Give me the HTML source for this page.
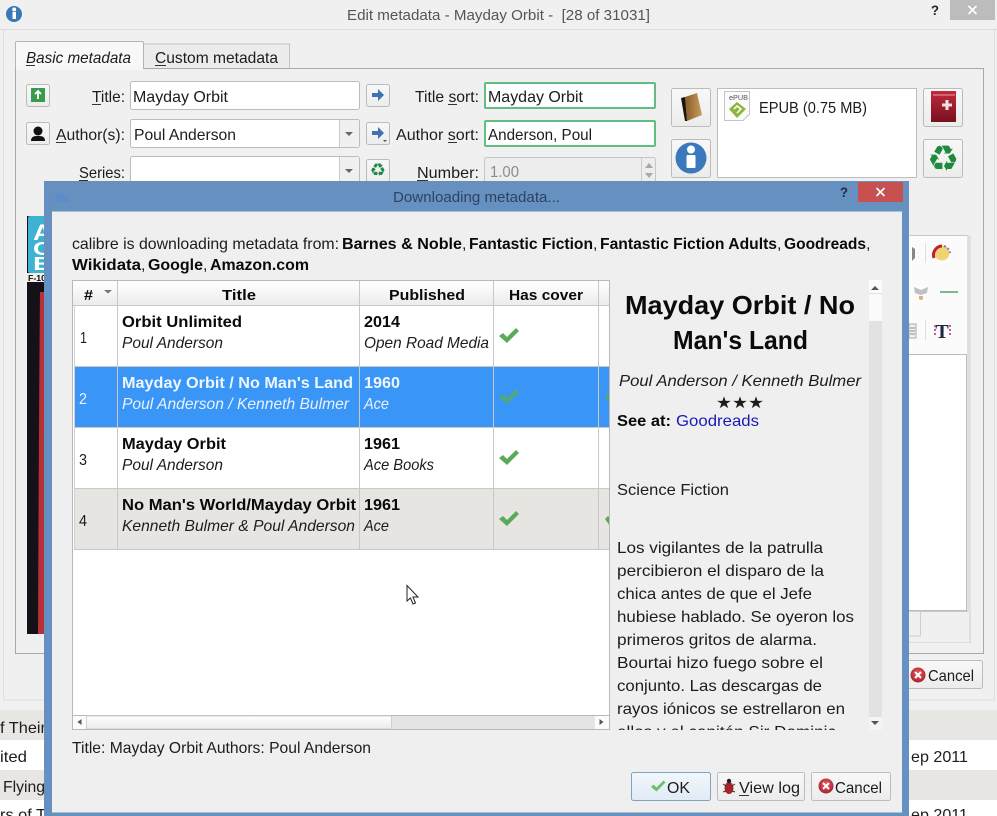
<!DOCTYPE html>
<html><head><meta charset="utf-8"><title>Edit metadata</title>
<style>
html,body{margin:0;padding:0;width:997px;height:816px;overflow:hidden;background:#f0f0f0}
svg{display:block}
text{font-family:"Liberation Sans",sans-serif;font-size:16px;fill:#1c1c1c}
.b{font-weight:bold;fill:#0a0a0a}
.i{font-style:italic}
.w{fill:#fff}
.g{fill:#e8f2ff}
</style></head><body>
<svg width="997" height="816" viewBox="0 0 997 816" xmlns="http://www.w3.org/2000/svg">
<defs>
<linearGradient id="hd" x1="0" y1="0" x2="0" y2="1"><stop offset="0" stop-color="#fff"/><stop offset="1" stop-color="#ebebeb"/></linearGradient>
<linearGradient id="btn" x1="0" y1="0" x2="0" y2="1"><stop offset="0" stop-color="#f8f8f8"/><stop offset="1" stop-color="#ececec"/></linearGradient>
<linearGradient id="ok" x1="0" y1="0" x2="0" y2="1"><stop offset="0" stop-color="#f2f7fb"/><stop offset="1" stop-color="#dfebf5"/></linearGradient>
<linearGradient id="rb" x1="0" y1="0" x2="0" y2="1"><stop offset="0" stop-color="#c42a3f"/><stop offset="1" stop-color="#76101f"/></linearGradient>
<linearGradient id="bk" x1="0" y1="0" x2="1" y2="0"><stop offset="0" stop-color="#8a5c28"/><stop offset="1" stop-color="#c99c5e"/></linearGradient>
<radialGradient id="cn" cx=".5" cy=".4" r=".6"><stop offset="0" stop-color="#e8606a"/><stop offset="1" stop-color="#a81f2a"/></radialGradient>
<clipPath id="pane"><rect x="612" y="281" width="256" height="449"/></clipPath>
<clipPath id="tbl"><rect x="73" y="281" width="536" height="434"/></clipPath>
</defs>

<!-- main window -->
<rect width="997" height="816" fill="#f0f0f0"/>
<path d="M0 29.5H997" stroke="#dcdcdc"/>
<path d="M3.5 29V700H994.5V29" fill="none" stroke="#dedede"/>
<circle cx="14" cy="14" r="8" fill="#3a78b8"/><rect x="12.5" y="12" width="3.5" height="7" fill="#fff"/><circle cx="14.2" cy="9.5" r="2" fill="#fff"/>
<text x="347" y="20" xml:space="preserve" textLength="303" lengthAdjust="spacingAndGlyphs" style="font-size:15px;fill:#555;white-space:pre">Edit metadata - Mayday Orbit -  [28 of 31031]</text>
<text x="931" y="15" textLength="8" lengthAdjust="spacingAndGlyphs" class="b" style="font-size:14px;fill:#222">?</text>
<rect x="950" y="0" width="45" height="20" fill="#bcbcbc"/>
<path d="M968.5 6l8 8M976.5 6l-8 8" stroke="#fff" stroke-width="1.6"/>

<!-- tabs -->
<rect x="15.5" y="68.5" width="968" height="585" fill="#f0f0f0" stroke="#a8a8a8"/>
<path d="M143.5 68V44H289.5V68" fill="#ececec" stroke="#c4c4c4"/>
<path d="M15.5 69V42.5Q15.5 41.5 17 41.5H142Q143.5 41.5 143.5 43V69" fill="#f8f8f8" stroke="#b4b4b4"/>
<rect x="16" y="66" width="127" height="4" fill="#f6f6f6"/>
<text x="26" y="63" class="i" textLength="105" lengthAdjust="spacingAndGlyphs">Basic metadata</text>
<path d="M26 65.5h9" stroke="#333"/>
<text x="155" y="63" textLength="123" lengthAdjust="spacingAndGlyphs">Custom metadata</text>
<path d="M155 65.5h11" stroke="#333"/>

<!-- form row 1 -->
<rect x="26.5" y="84.5" width="23" height="22" rx="2" fill="url(#btn)" stroke="#bbb"/>
<rect x="31" y="88" width="14" height="14" fill="#3c9a4c"/><path d="M38 99V92M35 94l3-3 3 3" stroke="#fff" stroke-width="1.8" fill="none"/>
<text x="92" y="102" textLength="33" lengthAdjust="spacingAndGlyphs">Title:</text><path d="M92 104.5h9" stroke="#333"/>
<rect x="130.5" y="81.5" width="229" height="28" rx="2" fill="#fff" stroke="#bcbcbc"/>
<text x="133" y="102" textLength="95" lengthAdjust="spacingAndGlyphs">Mayday Orbit</text>
<rect x="366.5" y="84.5" width="23" height="22" rx="2" fill="url(#btn)" stroke="#bbb"/>
<path d="M372 93h6v-4l6 6-6 6v-4h-6z" fill="#3f72b0"/>
<text x="415" y="102" textLength="64" lengthAdjust="spacingAndGlyphs">Title sort:</text><path d="M448 104.5h9" stroke="#333"/>
<rect x="485" y="83" width="170" height="25" rx="1" fill="#fff" stroke="#62bd80" stroke-width="2"/>
<text x="488" y="102" textLength="95" lengthAdjust="spacingAndGlyphs">Mayday Orbit</text>

<!-- form row 2 -->
<rect x="26.5" y="122.5" width="23" height="22" rx="2" fill="url(#btn)" stroke="#bbb"/>
<circle cx="38" cy="131" r="4.5" fill="#111"/><path d="M31 141c0-5 4-5 7-5s7 0 7 5z" fill="#111"/>
<text x="56" y="140" textLength="69" lengthAdjust="spacingAndGlyphs">Author(s):</text><path d="M56 142.5h10" stroke="#333"/>
<rect x="130.5" y="119.5" width="229" height="28" rx="2" fill="#fff" stroke="#bcbcbc"/>
<rect x="339.5" y="120" width="19.5" height="27" fill="#f0f0f0"/><path d="M339.5 120v27" stroke="#ccc"/>
<path d="M345 132h8l-4 4z" fill="#666"/>
<text x="134" y="140" textLength="102" lengthAdjust="spacingAndGlyphs">Poul Anderson</text>
<rect x="366.5" y="122.5" width="23" height="22" rx="2" fill="url(#btn)" stroke="#bbb"/>
<path d="M372 131h6v-4l6 6-6 6v-4h-6z" fill="#3f72b0"/><path d="M383 140h4l-2 2z" fill="#555"/>
<text x="396" y="140" textLength="83" lengthAdjust="spacingAndGlyphs">Author sort:</text><path d="M448 142.5h9" stroke="#333"/>
<rect x="485" y="121" width="170" height="25" rx="1" fill="#fff" stroke="#62bd80" stroke-width="2"/>
<text x="488" y="140" textLength="104" lengthAdjust="spacingAndGlyphs">Anderson, Poul</text>

<!-- form row 3 -->
<text x="79" y="178" textLength="46" lengthAdjust="spacingAndGlyphs">Series:</text><path d="M79 180.5h9" stroke="#333"/>
<rect x="130.5" y="156.5" width="229" height="30" rx="2" fill="#fff" stroke="#bcbcbc"/>
<rect x="339.5" y="157" width="19.5" height="29" fill="#f0f0f0"/><path d="M339.5 157v29" stroke="#ccc"/>
<path d="M345 169h8l-4 4z" fill="#666"/>
<rect x="366.5" y="159.5" width="23" height="24" rx="2" fill="url(#btn)" stroke="#bbb"/>
<text x="378" y="176" text-anchor="middle" style="font-family:'DejaVu Sans',sans-serif;font-size:18px;fill:#1e8a4a">♻</text>
<text x="417" y="178" textLength="62" lengthAdjust="spacingAndGlyphs">Number:</text><path d="M417 180.5h11" stroke="#333"/>
<rect x="484.5" y="157.5" width="171" height="28" rx="2" fill="#ededed" stroke="#c6c6c6"/>
<path d="M641.5 158v27" stroke="#ccc"/><path d="M645 168h8l-4-5zM645 173h8l-4 5z" fill="#a8a8a8"/>
<text x="490" y="177" textLength="29" lengthAdjust="spacingAndGlyphs" style="fill:#8c8c8c">1.00</text>

<!-- right buttons -->
<rect x="671.5" y="88.5" width="39" height="38" rx="2" fill="url(#btn)" stroke="#bbb"/>
<path d="M685 97l12-4 5 22-15 6z" fill="url(#bk)"/><path d="M681 98l4-1 2 24-2 0z" fill="#1a1408"/>
<rect x="671.5" y="139.5" width="39" height="38" rx="2" fill="url(#btn)" stroke="#bbb"/>
<circle cx="691" cy="158" r="15.5" fill="#3a79bb"/><rect x="686.5" y="155" width="9" height="13" rx="1" fill="#fff"/><circle cx="691" cy="149.5" r="4" fill="#fff"/>
<rect x="717.5" y="88.5" width="199" height="89" fill="#fff" stroke="#bdbdbd"/>
<path d="M724.5 91.5H749.5V114L743 120.5H724.5Z" fill="#fbfbfb" stroke="#c4c4c4"/>
<text x="729" y="100" textLength="19" lengthAdjust="spacingAndGlyphs" style="font-size:7px;fill:#555">ePUB</text>
<path d="M737 102l9 7-9 9-8-9z" fill="#8eb53f"/><path d="M734 109l3-3 4 3-4 4" fill="none" stroke="#fff" stroke-width="1.5"/>
<text x="759" y="113" textLength="108" lengthAdjust="spacingAndGlyphs">EPUB (0.75 MB)</text>
<rect x="923.5" y="88.5" width="39" height="38" rx="2" fill="url(#btn)" stroke="#bbb"/>
<path d="M931 91h25v31h-25z" fill="url(#rb)"/><path d="M933 95h22" stroke="#e8a0a8"/>
<path d="M947 100v10M942 105h10" stroke="#f4e0e0" stroke-width="3"/>
<rect x="923.5" y="139.5" width="39" height="38" rx="2" fill="url(#btn)" stroke="#bbb"/>
<text x="943" y="171" text-anchor="middle" style="font-family:'DejaVu Sans',sans-serif;font-size:36px;fill:#1f8a3e">♻</text>

<!-- cover -->
<rect x="27" y="216" width="20" height="418" fill="#141218"/>
<rect x="28" y="216" width="19" height="57" rx="2" fill="#3fb2d2"/>
<rect x="27" y="273" width="20" height="9" fill="#f0efe8"/>
<text x="28" y="281" textLength="18" lengthAdjust="spacingAndGlyphs" class="b" style="font-size:8px">F-10</text>
<text x="33" y="240" textLength="19" lengthAdjust="spacingAndGlyphs" class="b w" style="font-size:22px">A</text>
<text x="33" y="255" textLength="19" lengthAdjust="spacingAndGlyphs" class="b w" style="font-size:18px">C</text>
<text x="33" y="270" textLength="19" lengthAdjust="spacingAndGlyphs" class="b w" style="font-size:18px">E</text>
<path d="M40 292Q39 400 38 634H47V292Z" fill="#b83038"/>

<!-- right behind area -->
<rect x="900" y="235.5" width="68" height="376" fill="#fbfbfb" stroke="#c8c8c8"/>
<path d="M970 236V642" stroke="#dcdcdc" stroke-width="1.5"/>
<rect x="900" y="354.5" width="66.5" height="256" fill="#fff" stroke="#bcbcbc"/>
<path d="M925.5 243v20M925.5 320v20" stroke="#ddd"/>
<circle cx="942" cy="253" r="7.5" fill="#f0d470"/><path d="M934 258a9 9 0 0 1 8-12" fill="none" stroke="#c02030" stroke-width="3"/><path d="M944 246a9 9 0 0 1 6 7" fill="none" stroke="#8a70c0" stroke-width="2" stroke-dasharray="2 2"/>
<path d="M912 247l3 2v9l-3 3z" fill="#888"/>
<path d="M914 287l7 3 7-3-1 6-6 2-6-2zM919 296h4v3h-4z" fill="#c0c0c0"/><circle cx="921" cy="298" r="2" fill="#e2b070"/>
<path d="M940 292h18" stroke="#6cb07c" stroke-width="1.8"/>
<rect x="909" y="324" width="7" height="14" fill="#f2f2f2" stroke="#aaa"/><path d="M910 328h5M910 331h5M910 334h5" stroke="#888"/>
<text x="942" y="338" text-anchor="middle" class="b" style="font-family:'Liberation Serif',serif;font-size:20px;fill:#202840">T</text>
<path d="M935 325v11M950 325v11" stroke="#c060a0" stroke-width="2" stroke-dasharray="2 2"/>
<rect x="900" y="611.5" width="20.500" height="24.500" fill="#f0f0f0" stroke="#cfcfcf"/>
<path d="M900 642.5H970.5V612" fill="none" stroke="#dcdcdc"/>
<rect x="905" y="660.5" width="77.5" height="28" rx="2" fill="url(#btn)" stroke="#bcbcbc"/>
<circle cx="918" cy="675" r="7.5" fill="url(#cn)"/><path d="M915 672l6 6M921 672l-6 6" stroke="#fff" stroke-width="2"/>
<text x="928" y="681" textLength="46" lengthAdjust="spacingAndGlyphs">Cancel</text>

<!-- bottom rows -->
<rect x="0" y="710" width="997" height="30" fill="#e8e6e3"/>
<rect x="0" y="740" width="997" height="30" fill="#fff"/>
<rect x="0" y="770" width="997" height="30" fill="#e8e6e3"/>
<rect x="0" y="800" width="997" height="16" fill="#fff"/>
<text x="0" y="733" textLength="46" lengthAdjust="spacingAndGlyphs">f Their</text>
<text x="0" y="762" textLength="27" lengthAdjust="spacingAndGlyphs">ited</text>
<text x="3" y="792" textLength="42" lengthAdjust="spacingAndGlyphs">Flying</text>
<text x="0" y="820" textLength="46" lengthAdjust="spacingAndGlyphs">rs of T</text>
<text x="911" y="762" textLength="57" lengthAdjust="spacingAndGlyphs">ep 2011</text>
<text x="911" y="820" textLength="57" lengthAdjust="spacingAndGlyphs">ep 2011</text>

<!-- dialog -->
<rect x="44" y="181" width="865" height="632" fill="#6690bf"/>
<rect x="44" y="812" width="865" height="4" fill="#6690bf"/>
<rect x="52" y="211.5" width="850" height="601" fill="#efefef"/>
<path d="M55 198a6 5 0 0 1 12 0c3 0 3 4 0 4H57c-3 0-3-4-2-4z" fill="#5d8ccb"/>
<text x="393" y="202" textLength="167" lengthAdjust="spacingAndGlyphs" style="font-size:15px;fill:#2c4464">Downloading metadata...</text>
<text x="840" y="197" textLength="8" lengthAdjust="spacingAndGlyphs" class="b" style="font-size:14px;fill:#1c2c44">?</text>
<rect x="858" y="182" width="45" height="20" fill="#c75050"/>
<path d="M876.5 188l8 8M884.5 188l-8 8" stroke="#fff" stroke-width="1.6"/>

<text x="72" y="249" textLength="267" lengthAdjust="spacingAndGlyphs">calibre is downloading metadata from:</text>
<text x="342" y="249" class="b" textLength="120" lengthAdjust="spacingAndGlyphs">Barnes &amp; Noble</text><text x="462" y="249">,</text>
<text x="469" y="249" class="b" textLength="124" lengthAdjust="spacingAndGlyphs">Fantastic Fiction</text><text x="593" y="249">,</text>
<text x="600" y="249" class="b" textLength="177" lengthAdjust="spacingAndGlyphs">Fantastic Fiction Adults</text><text x="777" y="249">,</text>
<text x="784" y="249" class="b" textLength="82" lengthAdjust="spacingAndGlyphs">Goodreads</text><text x="866" y="249">,</text>
<text x="72" y="270" class="b" textLength="69" lengthAdjust="spacingAndGlyphs">Wikidata</text><text x="141" y="270">,</text>
<text x="148" y="270" class="b" textLength="55" lengthAdjust="spacingAndGlyphs">Google</text><text x="203" y="270">,</text>
<text x="210" y="270" class="b" textLength="99" lengthAdjust="spacingAndGlyphs">Amazon.com</text>

<!-- table -->
<rect x="72.5" y="280.5" width="537" height="449" fill="#fff" stroke="#b8b8b8"/>
<g clip-path="url(#tbl)">
<rect x="73" y="281" width="536" height="24.5" fill="url(#hd)"/>
<rect x="74" y="367" width="535" height="60" fill="#3a96f6"/>
<rect x="74" y="489" width="535" height="60" fill="#e6e5e1"/>
<path d="M73 305.5H609M74 366.5H609M74 427.5H609M74 488.5H609M74 549.5H609" stroke="#c8c8c8"/>
<path d="M117.5 281V549M359.5 281V549M493.5 281V549M598.5 281V549" stroke="#c8c8c8"/>
<path d="M74.5 306V549" stroke="#d0d0d0"/>
<text x="84" y="300" class="b" textLength="9" lengthAdjust="spacingAndGlyphs" style="font-size:15px">#</text>
<path d="M104 290h8l-4 3.5z" fill="#777"/>
<text x="222" y="300" class="b" textLength="34" lengthAdjust="spacingAndGlyphs" style="font-size:15px">Title</text>
<text x="389" y="300" class="b" textLength="76" lengthAdjust="spacingAndGlyphs" style="font-size:15px">Published</text>
<text x="509" y="300" class="b" textLength="74" lengthAdjust="spacingAndGlyphs" style="font-size:15px">Has cover</text>

<text x="80" y="343" textLength="7" lengthAdjust="spacingAndGlyphs">1</text>
<text x="122" y="327" class="b" textLength="120" lengthAdjust="spacingAndGlyphs">Orbit Unlimited</text>
<text x="122" y="348" class="i" textLength="101" lengthAdjust="spacingAndGlyphs">Poul Anderson</text>
<text x="364" y="327" class="b" textLength="36" lengthAdjust="spacingAndGlyphs">2014</text>
<text x="364" y="348" class="i" textLength="125" lengthAdjust="spacingAndGlyphs">Open Road Media</text>

<text x="79" y="404" textLength="8" lengthAdjust="spacingAndGlyphs" class="g">2</text>
<text x="122" y="388" class="b w" textLength="231" lengthAdjust="spacingAndGlyphs" style="fill:#eef6ff">Mayday Orbit / No Man's Land</text>
<text x="122" y="409" class="i g" textLength="227" lengthAdjust="spacingAndGlyphs">Poul Anderson / Kenneth Bulmer</text>
<text x="364" y="388" class="b" textLength="36" lengthAdjust="spacingAndGlyphs" style="fill:#eef6ff">1960</text>
<text x="364" y="409" class="i g" textLength="25" lengthAdjust="spacingAndGlyphs">Ace</text>

<text x="79" y="465" textLength="8" lengthAdjust="spacingAndGlyphs">3</text>
<text x="122" y="449" class="b" textLength="104" lengthAdjust="spacingAndGlyphs">Mayday Orbit</text>
<text x="122" y="470" class="i" textLength="101" lengthAdjust="spacingAndGlyphs">Poul Anderson</text>
<text x="364" y="449" class="b" textLength="36" lengthAdjust="spacingAndGlyphs">1961</text>
<text x="364" y="470" class="i" textLength="70" lengthAdjust="spacingAndGlyphs">Ace Books</text>

<text x="79" y="526" textLength="8" lengthAdjust="spacingAndGlyphs">4</text>
<text x="122" y="510" class="b" textLength="234" lengthAdjust="spacingAndGlyphs">No Man's World/Mayday Orbit</text>
<text x="122" y="531" class="i" textLength="233" lengthAdjust="spacingAndGlyphs">Kenneth Bulmer &amp; Poul Anderson</text>
<text x="364" y="510" class="b" textLength="36" lengthAdjust="spacingAndGlyphs">1961</text>
<text x="364" y="531" class="i" textLength="25" lengthAdjust="spacingAndGlyphs">Ace</text>

<path d="M499 336l4-3 4 4 9-9 3 3-12 12z" fill="#59ab58"/>
<path d="M499 397l4-3 4 4 9-9 3 3-12 12z" fill="#52a878"/>
<path d="M499 458l4-3 4 4 9-9 3 3-12 12z" fill="#59ab58"/>
<path d="M499 519l4-3 4 4 9-9 3 3-12 12z" fill="#59ab58"/>
<path d="M605 397l3-3 2 2v8z" fill="#52a878"/>
<path d="M605 519l3-3 2 2v8z" fill="#59ab58"/>
</g>
<!-- h scrollbar -->
<rect x="73" y="716" width="536" height="13.5" fill="#e4e4e4"/>
<path d="M73 715.5H609" stroke="#b8b8b8"/>
<rect x="86.5" y="716" width="305" height="13" fill="url(#hd)" stroke="#d0d0d0"/>
<rect x="73" y="716" width="13" height="13" fill="#fbfbfb"/>
<rect x="595" y="716" width="14" height="13" fill="#fbfbfb"/>
<path d="M81.5 719v6l-4-3z" fill="#555"/><path d="M599.5 719v6l4-3z" fill="#555"/>
<rect x="72.5" y="280.5" width="537" height="449" fill="none" stroke="#b8b8b8"/>

<!-- detail pane -->
<g clip-path="url(#pane)">
<text x="625" y="314" class="b" textLength="230" lengthAdjust="spacingAndGlyphs" style="font-size:26px">Mayday Orbit / No</text>
<text x="673" y="349" class="b" textLength="135" lengthAdjust="spacingAndGlyphs" style="font-size:26px">Man's Land</text>
<text x="619" y="386" class="i" textLength="242" lengthAdjust="spacingAndGlyphs">Poul Anderson / Kenneth Bulmer</text>
<text x="716" y="408" textLength="48" lengthAdjust="spacingAndGlyphs" style="font-family:'DejaVu Sans',sans-serif">★★★</text>
<text x="617" y="426" class="b" textLength="54" lengthAdjust="spacingAndGlyphs">See at:</text>
<text x="676" y="426" textLength="83" lengthAdjust="spacingAndGlyphs" style="fill:#1a1ab8">Goodreads</text>
<text x="617" y="495" textLength="112" lengthAdjust="spacingAndGlyphs">Science Fiction</text>
<text x="617" y="553" textLength="206" lengthAdjust="spacingAndGlyphs">Los vigilantes de la patrulla</text>
<text x="617" y="576" textLength="207" lengthAdjust="spacingAndGlyphs">percibieron el disparo de la</text>
<text x="617" y="599" textLength="195" lengthAdjust="spacingAndGlyphs">chica antes de que el Jefe</text>
<text x="617" y="622" textLength="237" lengthAdjust="spacingAndGlyphs">hubiese hablado. Se oyeron los</text>
<text x="617" y="645" textLength="200" lengthAdjust="spacingAndGlyphs">primeros gritos de alarma.</text>
<text x="617" y="668" textLength="206" lengthAdjust="spacingAndGlyphs">Bourtai hizo fuego sobre el</text>
<text x="617" y="691" textLength="205" lengthAdjust="spacingAndGlyphs">conjunto. Las descargas de</text>
<text x="617" y="714" textLength="228" lengthAdjust="spacingAndGlyphs">rayos iónicos se estrellaron en</text>
<text x="617" y="737" textLength="219" lengthAdjust="spacingAndGlyphs">ellos y el capitán Sir Dominic</text>
</g>
<rect x="869" y="280" width="13" height="450" fill="#e2e2e2"/>
<rect x="869" y="280" width="13" height="13" fill="#fbfbfb"/>
<rect x="869" y="294" width="13" height="27" fill="#fafafa"/>
<rect x="869" y="717" width="13" height="13" fill="#f4f4f4"/>
<path d="M871 290h8l-4-4z" fill="#555"/><path d="M871 721h8l-4 4z" fill="#555"/>

<text x="72" y="753" textLength="299" lengthAdjust="spacingAndGlyphs">Title: Mayday Orbit Authors: Poul Anderson</text>

<!-- dialog buttons -->
<rect x="631.5" y="772.5" width="79" height="28" rx="2" fill="url(#ok)" stroke="#7ea3c4"/>
<path d="M651 787l2.500-2.500 3 3 7-7 2 2-9 9z" fill="#6cc06c"/>
<text x="667" y="793" textLength="23" lengthAdjust="spacingAndGlyphs">OK</text>
<rect x="717.5" y="772.5" width="87" height="28" rx="2" fill="url(#btn)" stroke="#bcbcbc"/>
<ellipse cx="729" cy="788" rx="4.5" ry="6" fill="#a8222a"/><circle cx="729" cy="781" r="2.2" fill="#222"/><path d="M723 784l3 2M735 784l-3 2M723 792l3-1M735 792l-3-1" stroke="#333"/>
<text x="739" y="793" textLength="61" lengthAdjust="spacingAndGlyphs">View log</text><path d="M739 795.5h10" stroke="#333"/>
<rect x="811.5" y="772.5" width="79" height="28" rx="2" fill="url(#btn)" stroke="#bcbcbc"/>
<circle cx="826" cy="786" r="7.5" fill="url(#cn)"/><path d="M823 783l6 6M829 783l-6 6" stroke="#fff" stroke-width="2"/>
<text x="835" y="793" textLength="47" lengthAdjust="spacingAndGlyphs">Cancel</text>

<!-- cursor -->
<path d="M407 585.5V601l3.500-3 2.500 6 2.500-1-2.500-6h5z" fill="#fff" stroke="#222" stroke-width="1"/>
</svg>
</body></html>
